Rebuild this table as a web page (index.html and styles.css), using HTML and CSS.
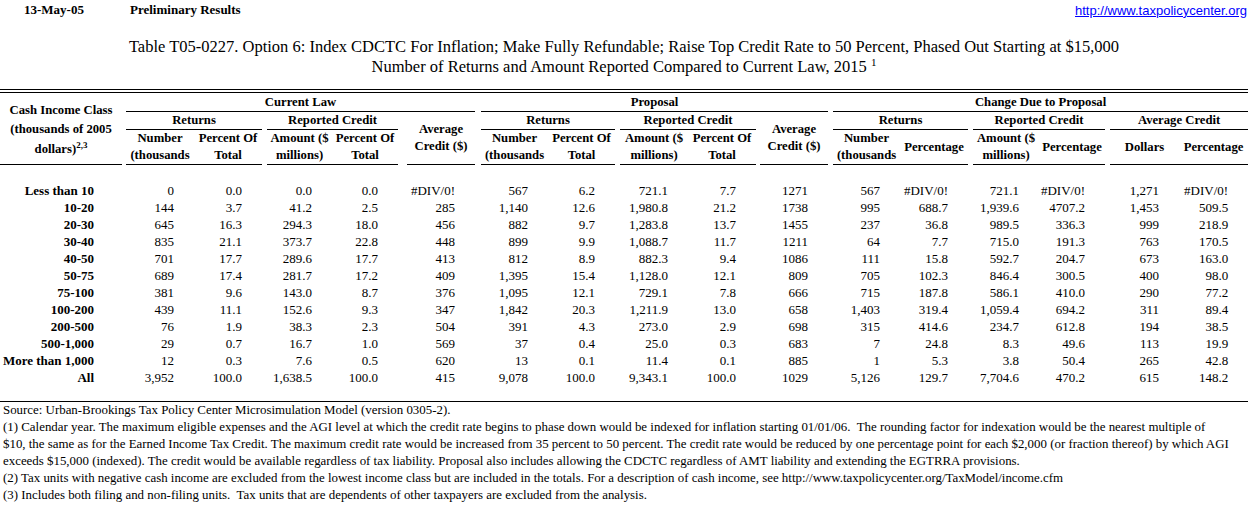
FILE: index.html
```html
<!DOCTYPE html>
<html lang="en">
<head>
<meta charset="utf-8">
<title>Table T05-0227</title>
<link rel="stylesheet" href="styles.css">
</head>
<body>
<div class="topbar">
  <span class="date">13-May-05</span>
  <span class="status">Preliminary Results</span>
  <a class="link" href="#">http://www.taxpolicycenter.org</a>
</div>
<div class="title">
  <div>Table T05-0227. Option 6: Index CDCTC For Inflation; Make Fully Refundable; Raise Top Credit Rate to 50 Percent, Phased Out Starting at $15,000</div>
  <div>Number of Returns and Amount Reported Compared to Current Law, 2015 <sup>1</sup></div>
</div>
<table class="tbl">
  <colgroup>
    <col class="w122"><col class="w4">
    <col class="w68"><col class="w68"><col class="w5">
    <col class="w65"><col class="w66"><col class="w9">
    <col class="w68"><col class="w6">
    <col class="w67"><col class="w67"><col class="w5">
    <col class="w68"><col class="w68"><col class="w4">
    <col class="w68"><col class="w5">
    <col class="w67"><col class="w68"><col class="w5">
    <col class="w66"><col class="w66"><col class="w5">
    <col class="w69"><col class="w69">
  </colgroup>
  <thead>
    <tr class="h1">
      <th class="u c0h" rowspan="3">Cash Income Class<br>(thousands of 2005<br>dollars)<sup>2,3</sup></th>
      <td class="sp" rowspan="3"></td>
      <th class="u" colspan="7">Current Law</th>
      <td class="sp" rowspan="3"></td>
      <th class="u" colspan="7">Proposal</th>
      <td class="sp" rowspan="3"></td>
      <th class="u" colspan="8">Change Due to Proposal</th>
    </tr>
    <tr class="h2">
      <th class="u" colspan="2">Returns</th>
      <td class="sp" rowspan="2"></td>
      <th class="u" colspan="2">Reported Credit</th>
      <td class="sp" rowspan="2"></td>
      <th class="u" rowspan="2">Average<br>Credit ($)</th>
      <th class="u" colspan="2">Returns</th>
      <td class="sp" rowspan="2"></td>
      <th class="u" colspan="2">Reported Credit</th>
      <td class="sp" rowspan="2"></td>
      <th class="u" rowspan="2">Average<br>Credit ($)</th>
      <th class="u" colspan="2">Returns</th>
      <td class="sp" rowspan="2"></td>
      <th class="u" colspan="2">Reported Credit</th>
      <td class="sp" rowspan="2"></td>
      <th class="u" colspan="2">Average Credit</th>
    </tr>
    <tr class="h3">
      <th class="u">Number<br>(thousands</th>
      <th class="u">Percent Of<br>Total</th>
      <th class="u">Amount ($<br>millions)</th>
      <th class="u">Percent Of<br>Total</th>
      <th class="u">Number<br>(thousands</th>
      <th class="u">Percent Of<br>Total</th>
      <th class="u">Amount ($<br>millions)</th>
      <th class="u">Percent Of<br>Total</th>
      <th class="u">Number<br>(thousands</th>
      <th class="u">Percentage</th>
      <th class="u">Amount ($<br>millions)</th>
      <th class="u">Percentage</th>
      <th class="u">Dollars</th>
      <th class="u">Percentage</th>
    </tr>
  </thead>
  <tbody>
    <tr class="gap"><td colspan="26"></td></tr>
    <tr class="d"><td class="lab">Less than 10</td><td></td><td class="n">0</td><td class="n">0.0</td><td></td><td class="n">0.0</td><td class="n">0.0</td><td></td><td class="n">#DIV/0!</td><td></td><td class="n">567</td><td class="n">6.2</td><td></td><td class="n">721.1</td><td class="n">7.7</td><td></td><td class="n">1271</td><td></td><td class="n">567</td><td class="n">#DIV/0!</td><td></td><td class="n">721.1</td><td class="n">#DIV/0!</td><td></td><td class="n">1,271</td><td class="n">#DIV/0!</td></tr>
    <tr class="d"><td class="lab">10-20</td><td></td><td class="n">144</td><td class="n">3.7</td><td></td><td class="n">41.2</td><td class="n">2.5</td><td></td><td class="n">285</td><td></td><td class="n">1,140</td><td class="n">12.6</td><td></td><td class="n">1,980.8</td><td class="n">21.2</td><td></td><td class="n">1738</td><td></td><td class="n">995</td><td class="n">688.7</td><td></td><td class="n">1,939.6</td><td class="n">4707.2</td><td></td><td class="n">1,453</td><td class="n">509.5</td></tr>
    <tr class="d"><td class="lab">20-30</td><td></td><td class="n">645</td><td class="n">16.3</td><td></td><td class="n">294.3</td><td class="n">18.0</td><td></td><td class="n">456</td><td></td><td class="n">882</td><td class="n">9.7</td><td></td><td class="n">1,283.8</td><td class="n">13.7</td><td></td><td class="n">1455</td><td></td><td class="n">237</td><td class="n">36.8</td><td></td><td class="n">989.5</td><td class="n">336.3</td><td></td><td class="n">999</td><td class="n">218.9</td></tr>
    <tr class="d"><td class="lab">30-40</td><td></td><td class="n">835</td><td class="n">21.1</td><td></td><td class="n">373.7</td><td class="n">22.8</td><td></td><td class="n">448</td><td></td><td class="n">899</td><td class="n">9.9</td><td></td><td class="n">1,088.7</td><td class="n">11.7</td><td></td><td class="n">1211</td><td></td><td class="n">64</td><td class="n">7.7</td><td></td><td class="n">715.0</td><td class="n">191.3</td><td></td><td class="n">763</td><td class="n">170.5</td></tr>
    <tr class="d"><td class="lab">40-50</td><td></td><td class="n">701</td><td class="n">17.7</td><td></td><td class="n">289.6</td><td class="n">17.7</td><td></td><td class="n">413</td><td></td><td class="n">812</td><td class="n">8.9</td><td></td><td class="n">882.3</td><td class="n">9.4</td><td></td><td class="n">1086</td><td></td><td class="n">111</td><td class="n">15.8</td><td></td><td class="n">592.7</td><td class="n">204.7</td><td></td><td class="n">673</td><td class="n">163.0</td></tr>
    <tr class="d"><td class="lab">50-75</td><td></td><td class="n">689</td><td class="n">17.4</td><td></td><td class="n">281.7</td><td class="n">17.2</td><td></td><td class="n">409</td><td></td><td class="n">1,395</td><td class="n">15.4</td><td></td><td class="n">1,128.0</td><td class="n">12.1</td><td></td><td class="n">809</td><td></td><td class="n">705</td><td class="n">102.3</td><td></td><td class="n">846.4</td><td class="n">300.5</td><td></td><td class="n">400</td><td class="n">98.0</td></tr>
    <tr class="d"><td class="lab">75-100</td><td></td><td class="n">381</td><td class="n">9.6</td><td></td><td class="n">143.0</td><td class="n">8.7</td><td></td><td class="n">376</td><td></td><td class="n">1,095</td><td class="n">12.1</td><td></td><td class="n">729.1</td><td class="n">7.8</td><td></td><td class="n">666</td><td></td><td class="n">715</td><td class="n">187.8</td><td></td><td class="n">586.1</td><td class="n">410.0</td><td></td><td class="n">290</td><td class="n">77.2</td></tr>
    <tr class="d"><td class="lab">100-200</td><td></td><td class="n">439</td><td class="n">11.1</td><td></td><td class="n">152.6</td><td class="n">9.3</td><td></td><td class="n">347</td><td></td><td class="n">1,842</td><td class="n">20.3</td><td></td><td class="n">1,211.9</td><td class="n">13.0</td><td></td><td class="n">658</td><td></td><td class="n">1,403</td><td class="n">319.4</td><td></td><td class="n">1,059.4</td><td class="n">694.2</td><td></td><td class="n">311</td><td class="n">89.4</td></tr>
    <tr class="d"><td class="lab">200-500</td><td></td><td class="n">76</td><td class="n">1.9</td><td></td><td class="n">38.3</td><td class="n">2.3</td><td></td><td class="n">504</td><td></td><td class="n">391</td><td class="n">4.3</td><td></td><td class="n">273.0</td><td class="n">2.9</td><td></td><td class="n">698</td><td></td><td class="n">315</td><td class="n">414.6</td><td></td><td class="n">234.7</td><td class="n">612.8</td><td></td><td class="n">194</td><td class="n">38.5</td></tr>
    <tr class="d"><td class="lab">500-1,000</td><td></td><td class="n">29</td><td class="n">0.7</td><td></td><td class="n">16.7</td><td class="n">1.0</td><td></td><td class="n">569</td><td></td><td class="n">37</td><td class="n">0.4</td><td></td><td class="n">25.0</td><td class="n">0.3</td><td></td><td class="n">683</td><td></td><td class="n">7</td><td class="n">24.8</td><td></td><td class="n">8.3</td><td class="n">49.6</td><td></td><td class="n">113</td><td class="n">19.9</td></tr>
    <tr class="d"><td class="lab">More than 1,000</td><td></td><td class="n">12</td><td class="n">0.3</td><td></td><td class="n">7.6</td><td class="n">0.5</td><td></td><td class="n">620</td><td></td><td class="n">13</td><td class="n">0.1</td><td></td><td class="n">11.4</td><td class="n">0.1</td><td></td><td class="n">885</td><td></td><td class="n">1</td><td class="n">5.3</td><td></td><td class="n">3.8</td><td class="n">50.4</td><td></td><td class="n">265</td><td class="n">42.8</td></tr>
    <tr class="d"><td class="lab">All</td><td></td><td class="n">3,952</td><td class="n">100.0</td><td></td><td class="n">1,638.5</td><td class="n">100.0</td><td></td><td class="n">415</td><td></td><td class="n">9,078</td><td class="n">100.0</td><td></td><td class="n">9,343.1</td><td class="n">100.0</td><td></td><td class="n">1029</td><td></td><td class="n">5,126</td><td class="n">129.7</td><td></td><td class="n">7,704.6</td><td class="n">470.2</td><td></td><td class="n">615</td><td class="n">148.2</td></tr>
    <tr class="gap-end"><td colspan="26"></td></tr>
  </tbody>
</table>
<div class="notes">
  <p>Source: Urban-Brookings Tax Policy Center Microsimulation Model (version 0305-2).</p>
  <p>(1) Calendar year. The maximum eligible expenses and the AGI level at which the credit rate begins to phase down would be indexed for inflation starting 01/01/06.&nbsp; The rounding factor for indexation would be the nearest multiple of<br>$10, the same as for the Earned Income Tax Credit. The maximum credit rate would be increased from 35 percent to 50 percent. The credit rate would be reduced by one percentage point for each $2,000 (or fraction thereof) by which AGI<br>exceeds $15,000 (indexed). The credit would be available regardless of tax liability. Proposal also includes allowing the CDCTC regardless of AMT liability and extending the EGTRRA provisions.</p>
  <p>(2) Tax units with negative cash income are excluded from the lowest income class but are included in the totals. For a description of cash income, see http://www.taxpolicycenter.org/TaxModel/income.cfm</p>
  <p>(3) Includes both filing and non-filing units.&nbsp; Tax units that are dependents of other taxpayers are excluded from the analysis.</p>
</div>
</body>
</html>
```

FILE: styles.css
```css
* { box-sizing: border-box; }

body {
  margin: 0;
  width: 1248px;
  background: #fff;
  color: #000;
  font-family: "Liberation Serif", "Times New Roman", serif;
}

.topbar {
  display: flex;
  align-items: center;
  height: 20px;
  font-size: 13px;
  font-weight: bold;
}

.date {
  margin-left: 24px;
  width: 106px;
}

.link {
  margin-left: auto;
  margin-right: 1px;
  font-family: "Liberation Sans", Arial, sans-serif;
  font-weight: normal;
  font-size: 13px;
  color: #0000ff;
  text-decoration: underline;
}

.title {
  margin-top: 17px;
  text-align: center;
  font-size: 16.5px;
  line-height: 20px;
}

.title sup {
  font-size: 11px;
  line-height: 0;
  vertical-align: 6px;
}

.tbl {
  margin-top: 12px;
  width: 1248px;
  table-layout: fixed;
  border-collapse: separate;
  border-spacing: 0;
  border-top: 4px double #000;
}

.w122 { width: 122px; }
.w4 { width: 4px; }
.w5 { width: 5px; }
.w6 { width: 6px; }
.w9 { width: 9px; }
.w65 { width: 65px; }
.w66 { width: 66px; }
.w67 { width: 67px; }
.w68 { width: 68px; }
.w69 { width: 69px; }

.tbl th {
  padding: 0;
  font-weight: bold;
  font-size: 12.7px;
  line-height: 17px;
  text-align: center;
  vertical-align: middle;
  white-space: nowrap;
}

.tbl td { padding: 0; }

.tbl .u { border-bottom: 1px solid #000; }

.h1 { height: 19px; }
.h2 { height: 18px; }
.h3 { height: 35px; }

.tbl .c0h {
  line-height: 19.5px;
  padding-top: 3px;
}

.c0h sup {
  font-size: 9px;
  line-height: 0;
  vertical-align: 5px;
}

.gap { height: 17px; }
.gap-end { height: 15px; }

.d { height: 17px; }

.d td {
  height: 17px;
  line-height: 17px;
  font-size: 13px;
  white-space: nowrap;
}

.d .lab {
  text-align: right;
  padding-right: 28px;
  font-weight: bold;
}

.d .n {
  text-align: right;
  padding-right: 20px;
}

.notes {
  border-top: 1px solid #000;
  padding-left: 3px;
  font-size: 12.9px;
  line-height: 17px;
  white-space: nowrap;
}

.notes p { margin: 0; }
```
